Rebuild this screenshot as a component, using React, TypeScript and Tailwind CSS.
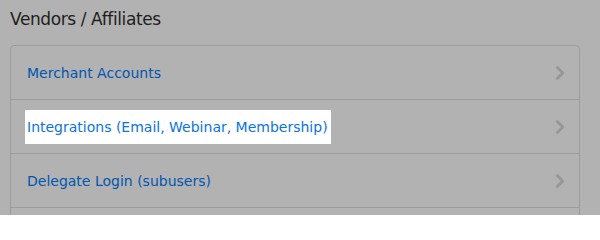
import { ChevronRight } from 'lucide-react';

const rows = [
  { label: 'Merchant Accounts', active: false },
  { label: 'Integrations (Email, Webinar, Membership)', active: true },
  { label: 'Delegate Login (subusers)', active: false },
  { label: '', active: false },
];

export default function App() {
  return (
    <div className="h-[215px] w-[600px] overflow-hidden bg-[#b2b2b2] px-[10px] pt-[7px] font-['DejaVu_Sans',sans-serif]">
      <h1 className="text-[17px] leading-[24px] tracking-[-0.4px] text-[#1e1e1e]">Vendors / Affiliates</h1>
      <div className="mt-[14px] w-[570px] rounded-[4px] border border-[#9c9c9c]">
        {rows.map((row, i) => (
          <div
            key={i}
            className="flex h-[54px] items-center justify-between border-b border-[#9c9c9c] pl-[16px] pr-[8px]"
          >
            {row.active ? (
              <span className="-ml-[2px] bg-white pl-[2px] pr-[3px] text-[14px] leading-[34px] text-[#0a74e0]">
                {row.label}
              </span>
            ) : (
              <span className="text-[14px] leading-[18px] text-[#0056b0]">{row.label}</span>
            )}
            {row.label && <ChevronRight className="h-[22px] w-[22px] text-[#979797]" strokeWidth={3} />}
          </div>
        ))}
      </div>
    </div>
  );
}
